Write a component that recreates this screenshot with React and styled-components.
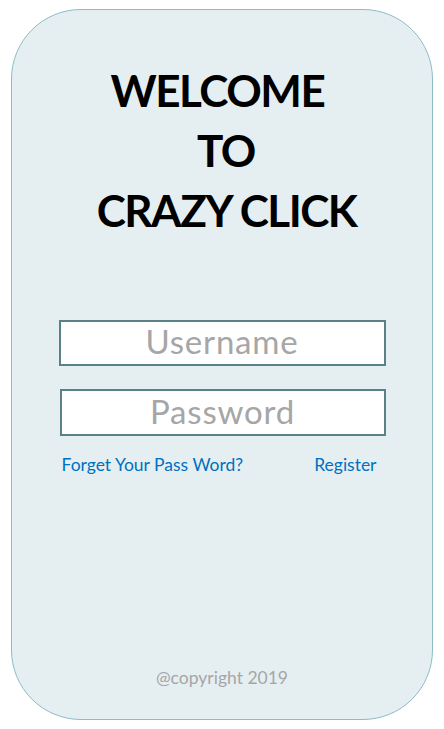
import React from "react"
import styled, { createGlobalStyle } from "styled-components"

const GlobalStyle = createGlobalStyle`
  html, body {
    margin: 0;
    padding: 0;
    background: #ffffff;
  }
  body {
    font-family: Lato, "Open Sans", sans-serif;
  }
`

const Page = styled.div`
  padding: 9px 11px 9px 11px;
`

const Card = styled.div`
  box-sizing: border-box;
  width: 422px;
  height: 711px;
  background: #e5eff2;
  border: 1px solid #8dbcc6;
  border-radius: 70px;
  display: flex;
  flex-direction: column;
  align-items: center;
  padding-top: 50px;
  padding-bottom: 31px;
`

const Title = styled.h1`
  margin: 0;
  font-family: Lato, sans-serif;
  font-weight: 700;
  font-size: 44px;
  letter-spacing: -1.5px;
  line-height: 60px;
  text-align: center;
  color: #000000;
  white-space: pre;
`

const Form = styled.div`
  margin-top: 80px;
  width: 327px;
  display: flex;
  flex-direction: column;
  gap: 23px;
`

const Field = styled.div`
  box-sizing: border-box;
  height: ${(p) => p.$h || 46}px;
  background: #ffffff;
  border: 2px solid #5b8188;
  display: flex;
  align-items: center;
  justify-content: center;
  padding-bottom: 4px;
  margin-left: ${(p) => p.$shift || 0}px;
  font-family: Lato, sans-serif;
  font-size: 33px;
  letter-spacing: 0.8px;
  color: #a6a6a6;
`

const Links = styled.div`
  display: flex;
  justify-content: space-between;
  margin-top: -5px;
  padding: 0 9px 0 3px;
`

const Link = styled.a`
  font-family: Lato, sans-serif;
  font-size: 17.5px;
  color: #0070c0;
  text-decoration: none;
`

const Footer = styled.div`
  margin-top: auto;
  font-family: Lato, sans-serif;
  font-size: 17.5px;
  color: #a6a6a6;
`

export default function App() {
  return (
    <Page>
      <GlobalStyle />
      <Card>
        <Title>{"WELCOME \n TO\n CRAZY CLICK"}</Title>
        <Form>
          <Field $h={46}>Username</Field>
          <Field $h={47} $shift={1}>Password</Field>
          <Links>
            <Link href="#">Forget Your Pass Word?</Link>
            <Link href="#">Register</Link>
          </Links>
        </Form>
        <Footer>@copyright 2019</Footer>
      </Card>
    </Page>
  )
}
